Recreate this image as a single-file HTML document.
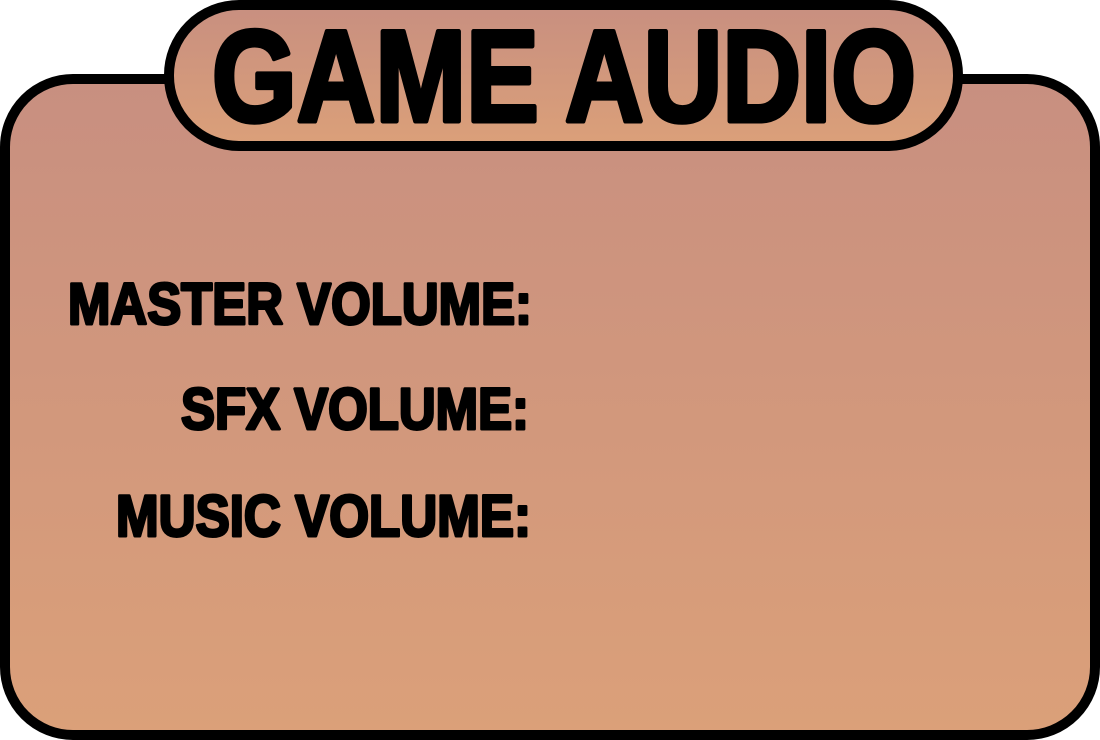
<!DOCTYPE html>
<html><head><style>
html,body{margin:0;padding:0;background:#fff;width:1100px;height:740px;overflow:hidden}
</style></head><body>
<svg width="1100" height="740" viewBox="0 0 1100 740" xmlns="http://www.w3.org/2000/svg">
<defs>
<linearGradient id="g1" x1="0" y1="0" x2="0" y2="1">
<stop offset="0" stop-color="#c88f80"/><stop offset="1" stop-color="#dba079"/>
</linearGradient>
<linearGradient id="g2" x1="0" y1="0" x2="0" y2="1">
<stop offset="0" stop-color="#c88f80"/><stop offset="1" stop-color="#dba079"/>
</linearGradient>
</defs>
<rect x="5" y="79" width="1090" height="656" rx="68" fill="url(#g1)" stroke="#000" stroke-width="10"/>
<rect x="169" y="5" width="789" height="141" rx="70" fill="url(#g2)" stroke="#000" stroke-width="10"/>
<g font-family="Liberation Sans, sans-serif" font-weight="bold" fill="#000" stroke="#000" stroke-linejoin="round">
<text x="212" y="121" font-size="130" textLength="704" lengthAdjust="spacingAndGlyphs" stroke-width="5">GAME AUDIO</text>
<text x="68" y="324" font-size="58" textLength="464" lengthAdjust="spacingAndGlyphs" stroke-width="3">MASTER VOLUME:</text>
<text x="181" y="429" font-size="58" textLength="348" lengthAdjust="spacingAndGlyphs" stroke-width="3">SFX VOLUME:</text>
<text x="116" y="536" font-size="58" textLength="415" lengthAdjust="spacingAndGlyphs" stroke-width="3">MUSIC VOLUME:</text>
</g>
</svg>
</body></html>
